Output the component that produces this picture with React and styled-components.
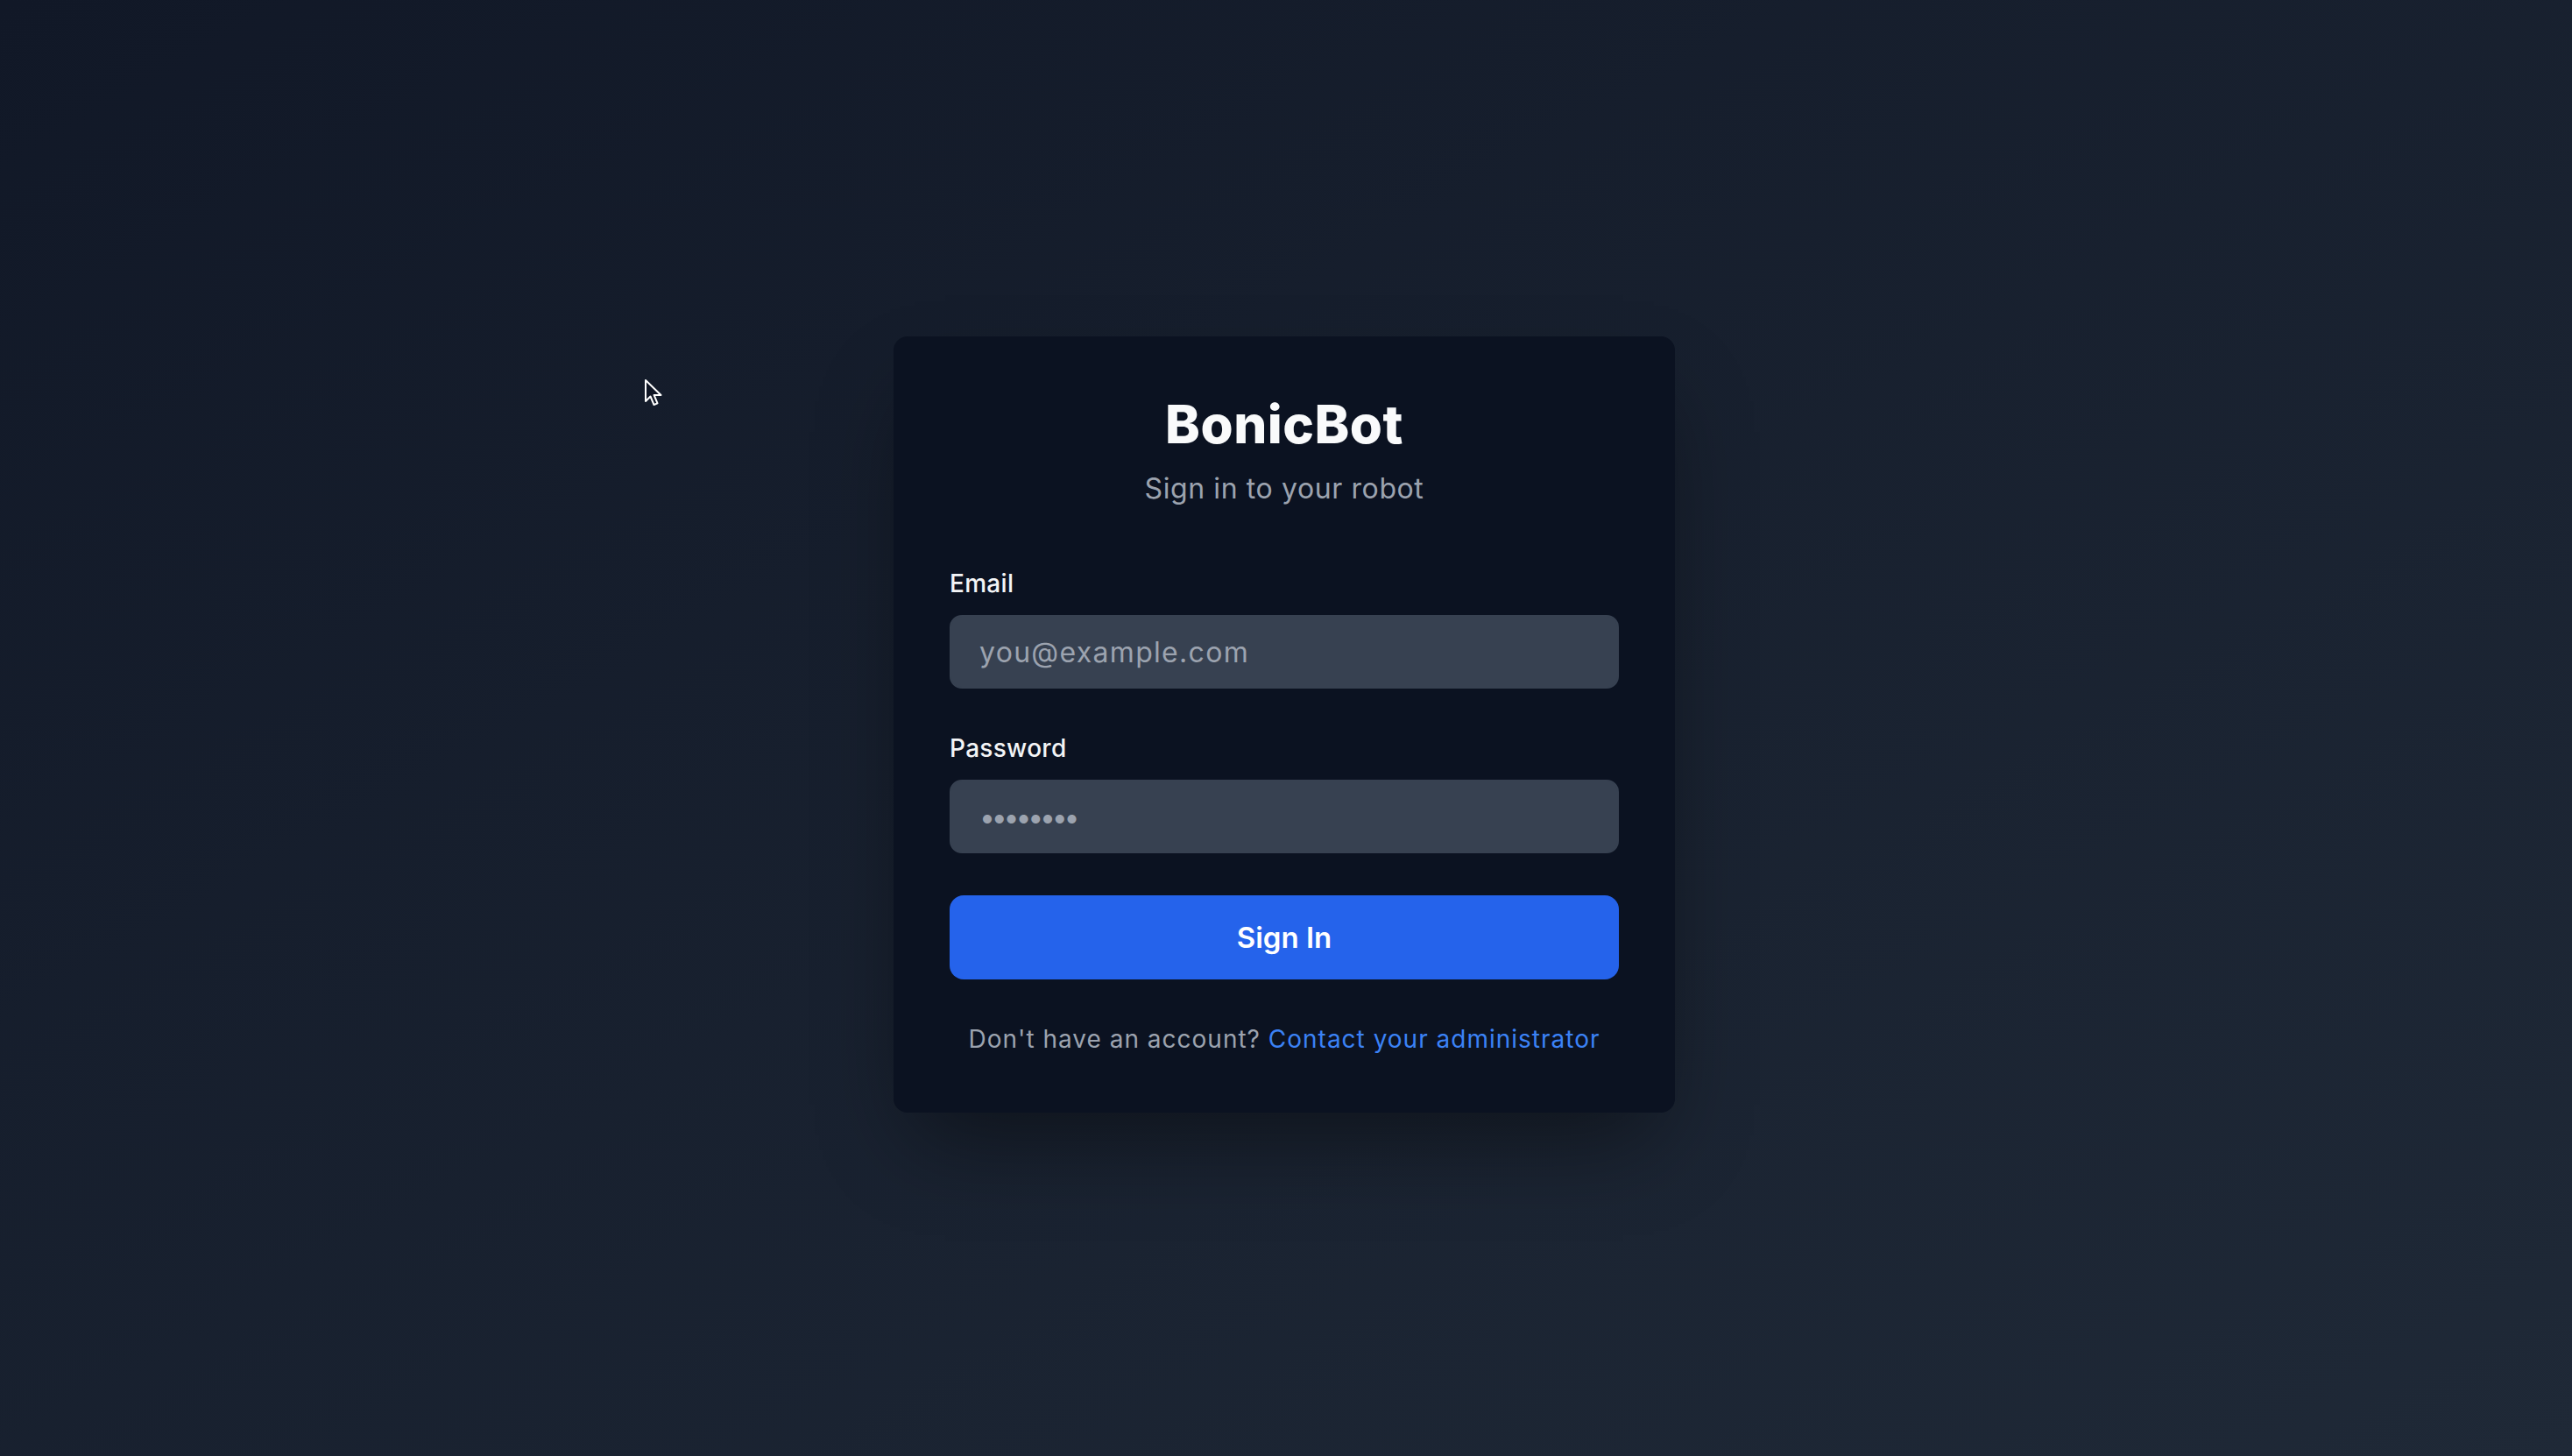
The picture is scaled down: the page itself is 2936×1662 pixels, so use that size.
import styled, { createGlobalStyle } from 'styled-components'

const GlobalStyle = createGlobalStyle`
    *{
        box-sizing: border-box;
    }
    html, body{
        margin: 0;
        padding: 0;
        height: 100%;
    }
    body{
        font-family: Inter, "Noto Sans", "Liberation Sans", sans-serif;
        -webkit-font-smoothing: antialiased;
    }
    #root{
        min-height: 100vh;
    }
`

function Cursor(){
    return(
        <Pointer width="22" height="34" viewBox="0 0 22 34">
            <path
                d="M2 2 L2 26 L7.5 20.5 L11.5 30 L15.5 28.3 L11.6 19 L19.5 19 Z"
                fill="#0f1524"
                stroke="#ffffff"
                strokeWidth="2"
                strokeLinejoin="round"
            />
        </Pointer>
    )
}

function App(){
    return(
        <Page>
            <GlobalStyle/>
            <Cursor/>
            <Card>
                <Header>
                    <Title>BonicBot</Title>
                    <Subtitle>Sign in to your robot</Subtitle>
                </Header>

                <Form onSubmit={e => e.preventDefault()}>
                    <Field>
                        <Label htmlFor="email">Email</Label>
                        <Input id="email" type="email" placeholder="you@example.com" $spacing="1.3px"/>
                    </Field>

                    <Field>
                        <Label htmlFor="password">Password</Label>
                        <Input id="password" type="password" placeholder="••••••••" $spacing="-4.2px"/>
                    </Field>

                    <Button type="submit">Sign In</Button>
                </Form>

                <Footer>
                    Don't have an account? <Link href="#">Contact your administrator</Link>
                </Footer>
            </Card>
        </Page>
    )
}

export default App

const Page = styled.div`
    position: relative;
    min-height: 100vh;
    display: flex;
    align-items: center;
    justify-content: center;
    padding: 0 4px 8px 0;
    background: linear-gradient(to bottom right, #111827, #1f2937);
`

const Pointer = styled.svg`
    position: absolute;
    left: 735px;
    top: 432px;
`

const Card = styled.div`
    width: 892px;
    padding: 64px;
    border-radius: 16px;
    background: #0b1221;
    box-shadow: 0 50px 100px -24px rgba(0, 0, 0, 0.45);
`

const Header = styled.div`
    text-align: center;
    margin-bottom: 64px;
`

const Title = styled.h1`
    margin: 0;
    font-size: 60px;
    line-height: 72px;
    font-weight: 800;
    letter-spacing: 0.5px;
    color: #f9fafb;
`

const Subtitle = styled.p`
    margin: 14px 0 0;
    font-size: 32px;
    line-height: 48px;
    font-weight: 400;
    letter-spacing: 0.6px;
    color: #9ca3af;
`

const Form = styled.form`
    display: flex;
    flex-direction: column;
    gap: 48px;
`

const Field = styled.div`
    display: flex;
    flex-direction: column;
    gap: 16px;
`

const Label = styled.label`
    font-size: 28px;
    line-height: 40px;
    font-weight: 500;
    letter-spacing: 0.3px;
    color: #f3f4f6;
`

const Input = styled.input`
    width: 100%;
    height: 84px;
    padding: 16px 32px;
    border: 2px solid #374151;
    border-radius: 14px;
    background: #374151;
    font-family: inherit;
    font-size: 32px;
    line-height: 48px;
    letter-spacing: ${p => p.$spacing || 'normal'};
    color: #f3f4f6;
    outline: none;

    &::placeholder{
        color: #9ca3af;
    }
`

const Button = styled.button`
    height: 96px;
    border: none;
    border-radius: 16px;
    background: #2563eb;
    color: #ffffff;
    font-family: inherit;
    font-size: 33px;
    font-weight: 600;
    cursor: pointer;
`

const Footer = styled.p`
    margin: 48px 0 0;
    text-align: center;
    font-size: 28px;
    line-height: 40px;
    letter-spacing: 1px;
    color: #9ca3af;
`

const Link = styled.a`
    color: #3b82f6;
    text-decoration: none;
`
